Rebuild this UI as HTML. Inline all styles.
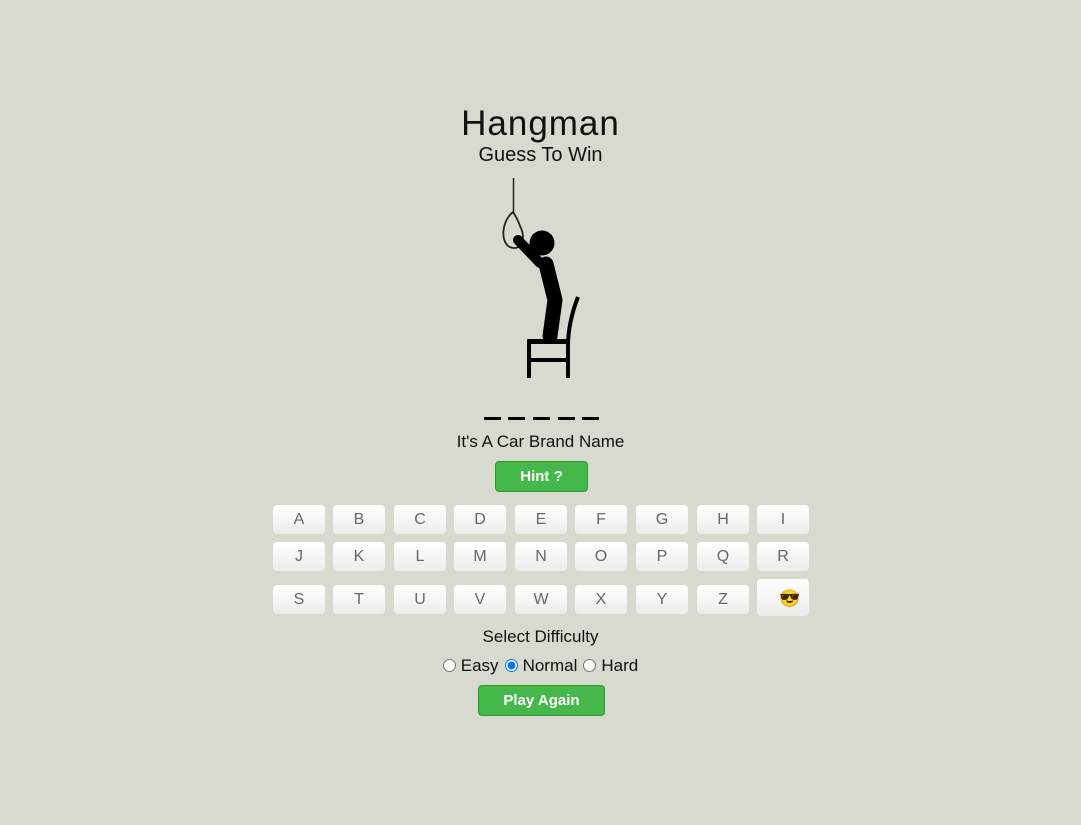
<!DOCTYPE html>
<html><head><style>
body{margin:0;width:1081px;height:825px;background:#d8d9cf;font-family:"Liberation Sans",sans-serif;position:relative;overflow:hidden;color:#111}
.a{position:absolute}
.c{position:absolute;left:0;width:1081px;text-align:center}
.k{position:absolute;width:52px;height:29px;border-radius:4px;background:linear-gradient(#fff,#ececec);color:#666;font-size:16px;text-align:center;line-height:29px}
.g{position:absolute;background:#44b84a;border:1px solid #2a9a30;border-radius:4px;color:#fff;font-weight:bold;font-size:15px;text-align:center}
input{margin:0 5px 0 8px;vertical-align:-1px}
</style></head><body>
<div class="c" style="top:104px;font-size:35px;letter-spacing:1px">Hangman</div>
<div class="c" style="top:144px;font-size:20px">Guess To Win</div>
<svg class="a" style="left:0;top:0" width="1081" height="430">
<line x1="513.5" y1="178" x2="513.5" y2="214" stroke="#222" stroke-width="1.5"/>
<path d="M513 212 C500 222 500 248 514 248 C522 248 526 238 520 226 C518 220 515 215 513 212" stroke="#222" stroke-width="1.8" fill="none"/>
<circle cx="542" cy="243" r="12.5" fill="#000"/>
<path d="M518 240 L540 263" stroke="#000" stroke-width="10" stroke-linecap="round"/>
<path d="M546 264 L555 300 L550 336" stroke="#000" stroke-width="15" stroke-linecap="round" stroke-linejoin="round" fill="none"/>
<path d="M578 297 C572 312 568 330 568 345 L568 378" stroke="#000" stroke-width="4" fill="none"/>
<rect x="527" y="339" width="42" height="5" fill="#000"/>
<rect x="527" y="339" width="4" height="39" fill="#000"/>
<rect x="527" y="358" width="42" height="4" fill="#000"/>
<g fill="#000"><rect x="484" y="417" width="17" height="3"/><rect x="508" y="417" width="17" height="3"/><rect x="533" y="417" width="17" height="3"/><rect x="558" y="417" width="17" height="3"/><rect x="582" y="417" width="17" height="3"/></g>
</svg>
<div class="c" style="top:432px;font-size:17px">It's A Car Brand Name</div>
<div class="g" style="left:495px;top:461px;width:91px;height:29px;line-height:29px">Hint ?</div>
<div class="k" style="left:273px;top:505px">A</div><div class="k" style="left:333px;top:505px">B</div><div class="k" style="left:394px;top:505px">C</div><div class="k" style="left:454px;top:505px">D</div><div class="k" style="left:515px;top:505px">E</div><div class="k" style="left:575px;top:505px">F</div><div class="k" style="left:636px;top:505px">G</div><div class="k" style="left:697px;top:505px">H</div><div class="k" style="left:757px;top:505px">I</div>
<div class="k" style="left:273px;top:542px">J</div><div class="k" style="left:333px;top:542px">K</div><div class="k" style="left:394px;top:542px">L</div><div class="k" style="left:454px;top:542px">M</div><div class="k" style="left:515px;top:542px">N</div><div class="k" style="left:575px;top:542px">O</div><div class="k" style="left:636px;top:542px">P</div><div class="k" style="left:697px;top:542px">Q</div><div class="k" style="left:757px;top:542px">R</div>
<div class="k" style="left:273px;top:585px">S</div><div class="k" style="left:333px;top:585px">T</div><div class="k" style="left:394px;top:585px">U</div><div class="k" style="left:454px;top:585px">V</div><div class="k" style="left:515px;top:585px">W</div><div class="k" style="left:575px;top:585px">X</div><div class="k" style="left:636px;top:585px">Y</div><div class="k" style="left:697px;top:585px">Z</div>
<div class="k" style="left:757px;top:579px;height:37px;line-height:40px"><span style="margin-left:14px;font-size:17px">😎</span></div>
<div class="c" style="top:627px;font-size:17px">Select Difficulty</div>
<div class="c" style="top:656px;font-size:17px;left:-4px"><input type="radio">Easy<input type="radio" checked style="margin-left:6px">Normal<input type="radio" style="margin-left:6px">Hard</div>
<div class="g" style="left:478px;top:685px;width:125px;height:29px;line-height:29px">Play Again</div>
</body></html>
